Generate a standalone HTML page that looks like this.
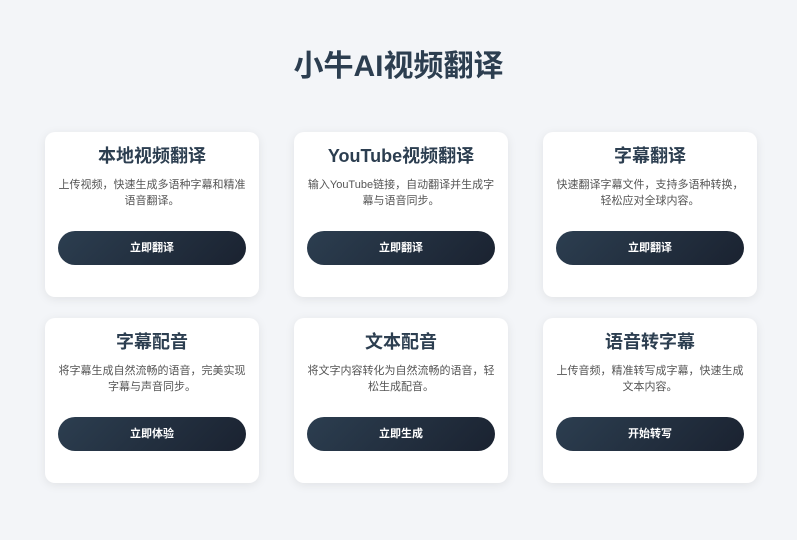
<!DOCTYPE html>
<html><head><meta charset="utf-8"><style>
*{margin:0;padding:0;box-sizing:border-box}
body{width:797px;height:540px;background:#f3f5f8;font-family:"Liberation Sans","Noto Sans CJK SC",sans-serif;overflow:hidden;position:relative}
h1{position:absolute;top:47px;left:0;width:797px;text-align:center;font-size:30px;font-weight:bold;color:#2c3e50;line-height:40px}
.card{position:absolute;width:214px;height:165px;background:#fff;border-radius:10px;box-shadow:0 2px 10px rgba(0,0,0,0.08);text-align:center}
.card h2{position:absolute;top:12px;left:0;width:100%;font-size:18px;font-weight:bold;color:#2c3e50;line-height:24px}
.card p{position:absolute;top:45px;left:12px;right:12px;font-size:11px;color:#555;line-height:16px}
.card .b{position:absolute;top:99px;left:13px;width:188px;height:34px;border-radius:17px;background:linear-gradient(135deg,#2c3e50,#1a2230);color:#fff;font-size:11px;font-weight:bold;line-height:34px}
</style></head><body>
<h1>小牛AI视频翻译</h1>
<div class="card" style="left:45px;top:132px"><h2>本地视频翻译</h2><p>上传视频，快速生成多语种字幕和精准语音翻译。</p><div class="b">立即翻译</div></div>
<div class="card" style="left:294px;top:132px"><h2>YouTube视频翻译</h2><p>输入YouTube链接，自动翻译并生成字幕与语音同步。</p><div class="b">立即翻译</div></div>
<div class="card" style="left:543px;top:132px"><h2>字幕翻译</h2><p>快速翻译字幕文件，支持多语种转换，轻松应对全球内容。</p><div class="b">立即翻译</div></div>
<div class="card" style="left:45px;top:318px"><h2>字幕配音</h2><p>将字幕生成自然流畅的语音，完美实现字幕与声音同步。</p><div class="b">立即体验</div></div>
<div class="card" style="left:294px;top:318px"><h2>文本配音</h2><p>将文字内容转化为自然流畅的语音，轻松生成配音。</p><div class="b">立即生成</div></div>
<div class="card" style="left:543px;top:318px"><h2>语音转字幕</h2><p>上传音频，精准转写成字幕，快速生成文本内容。</p><div class="b">开始转写</div></div>
</body></html>
